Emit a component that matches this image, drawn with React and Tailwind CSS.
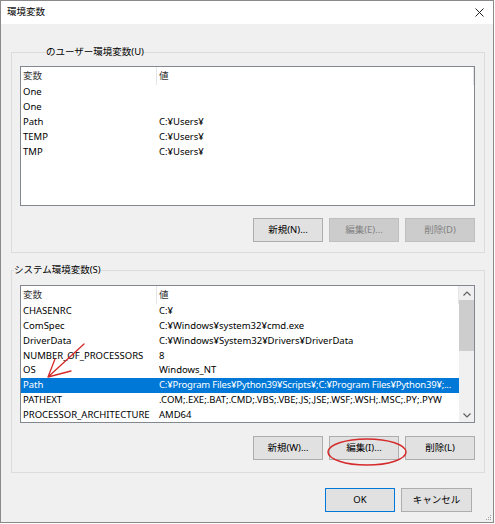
import React from 'react';

const font = { fontFamily: '"Noto Sans", "Noto Sans CJK JP", sans-serif' };

const userVars = [
  ['One', ''],
  ['One', ''],
  ['Path', 'C:¥Users¥'],
  ['TEMP', 'C:¥Users¥'],
  ['TMP', 'C:¥Users¥'],
];

const sysVars = [
  ['CHASENRC', 'C:¥'],
  ['ComSpec', 'C:¥Windows¥system32¥cmd.exe'],
  ['DriverData', 'C:¥Windows¥System32¥Drivers¥DriverData'],
  ['NUMBER_OF_PROCESSORS', '8'],
  ['OS', 'Windows_NT'],
  ['Path', 'C:¥Program Files¥Python39¥Scripts¥;C:¥Program Files¥Python39¥;...'],
  ['PATHEXT', '.COM;.EXE;.BAT;.CMD;.VBS;.VBE;.JS;.JSE;.WSF;.WSH;.MSC;.PY;.PYW'],
  ['PROCESSOR_ARCHITECTURE', 'AMD64'],
];

const Button = ({ children, disabled, primary }) => (
  <div
    className={
      'w-[70px] h-[24px] flex items-center justify-center text-[9.5px] border ' +
      (disabled
        ? 'bg-[#cccccc] border-[#bfbfbf] text-[#838383]'
        : primary
        ? 'bg-[#e1e1e1] border-[#0078d7] text-black'
        : 'bg-[#e1e1e1] border-[#adadad] text-black')
    }
  >
    {children}
  </div>
);

const Header = () => (
  <div className="flex h-[18px] items-center text-[#333] shrink-0">
    <div className="w-[136px] pl-[2px] border-r border-[#e5e5e5] h-full flex items-center">変数</div>
    <div className="flex-1 pl-[2px] h-full flex items-center border-r border-[#e5e5e5]">値</div>
  </div>
);

const Row = ({ name, value, selected }) => (
  <div
    className={
      'flex h-[15px] items-center whitespace-nowrap ' +
      (selected ? 'bg-[#0078d7] text-white' : 'text-black')
    }
  >
    <div className="w-[136px] pl-[2px] overflow-hidden">{name}</div>
    <div className={'flex-1 pl-[2px] overflow-hidden ' + (selected ? 'tracking-[-0.2px]' : '')}>{value}</div>
  </div>
);

const Buttons = ({ labels, disabled = [] }) => (
  <div className="flex justify-end gap-[6px] pr-[9px]">
    {labels.map((l, i) => (
      <Button key={l} disabled={disabled[i]}>{l}</Button>
    ))}
  </div>
);

export default function App() {
  return (
    <div className="w-[495px] h-[524px] bg-white" style={font}>
      <div className="relative w-[494px] h-[523px] border border-[#8a8a8a] flex flex-col text-[9.5px]">
        {/* title bar */}
        <div className="h-[23px] bg-white flex items-center justify-between pl-[6px] pr-[9px] shrink-0">
          <span className="text-[9.5px] text-black">環境変数</span>
          <svg width="9" height="9" viewBox="0 0 9 9">
            <path d="M0.5 0.5 L8.5 8.5 M8.5 0.5 L0.5 8.5" stroke="#222" strokeWidth="1" />
          </svg>
        </div>

        <div className="flex-1 bg-[#f0f0f0] pl-[10px] flex flex-col">
          {/* user variables */}
          <fieldset className="mt-[20px] w-[474px] border border-[#dcdcdc] px-0 pb-[10px]">
            <legend className="ml-[34px] leading-[16px] text-black">のユーザー環境変数(U)</legend>
            <div className="ml-[8px] mt-[6px] w-[455px] h-[140px] bg-white border border-[#828790] flex flex-col">
              <Header />
              {userVars.map((v, i) => (
                <Row key={i} name={v[0]} value={v[1]} />
              ))}
            </div>
            <div className="mt-[12px]">
              <Buttons labels={['新規(N)...', '編集(E)...', '削除(D)']} disabled={[false, true, true]} />
            </div>
          </fieldset>

          {/* system variables */}
          <fieldset className="mt-[9px] w-[474px] border border-[#dcdcdc] px-0 pb-[12px]">
            <legend className="ml-[2px] leading-[16px] text-black">システム環境変数(S)</legend>
            <div className="ml-[8px] mt-[7px] w-[455px] h-[138px] bg-white border border-[#828790] flex">
              <div className="flex-1 flex flex-col overflow-hidden">
                <Header />
                {sysVars.map((v, i) => (
                  <Row key={i} name={v[0]} value={v[1]} selected={i === 5} />
                ))}
              </div>
              <div className="w-[15px] bg-[#f0f0f0] flex flex-col items-center">
                <div className="h-[14px] flex items-center justify-center">
                  <svg width="8" height="5" viewBox="0 0 8 5">
                    <path d="M0.5 4.5 L4 1 L7.5 4.5" stroke="#606060" strokeWidth="1.2" fill="none" />
                  </svg>
                </div>
                <div className="w-full h-[51px] bg-[#cdcdcd]" />
                <div className="flex-1" />
                <div className="h-[14px] flex items-center justify-center">
                  <svg width="8" height="5" viewBox="0 0 8 5">
                    <path d="M0.5 0.5 L4 4 L7.5 0.5" stroke="#606060" strokeWidth="1.2" fill="none" />
                  </svg>
                </div>
              </div>
            </div>
            <div className="mt-[13px]">
              <Buttons labels={['新規(W)...', '編集(I)...', '削除(L)']} />
            </div>
          </fieldset>

          <div className="mt-[15px] flex justify-end gap-[6px] pr-[21px]">
            <Button primary>OK</Button>
            <div className="w-[71px] h-[24px] flex items-center justify-center border bg-[#e1e1e1] border-[#adadad]">キャンセル</div>
          </div>
        </div>

        {/* annotations */}
        <svg className="absolute left-0 top-0 pointer-events-none" width="494" height="523" viewBox="-1 -1 494 523">
          <ellipse cx="365" cy="450" rx="39" ry="13" fill="none" stroke="#d52b2b" strokeWidth="1.5" />
          <path d="M82 342 L46 375 M46 375 L53 357 M46 375 L69 369" stroke="#d52b2b" strokeWidth="1.3" fill="none" strokeLinecap="round" />
          <g fill="#a0a0a0">
            <rect x="488" y="513" width="1" height="1" />
            <rect x="486" y="515" width="1" height="1" />
            <rect x="488" y="515" width="1" height="1" />
            <rect x="484" y="517" width="1" height="1" />
            <rect x="486" y="517" width="1" height="1" />
            <rect x="488" y="517" width="1" height="1" />
          </g>
        </svg>
      </div>
    </div>
  );
}
